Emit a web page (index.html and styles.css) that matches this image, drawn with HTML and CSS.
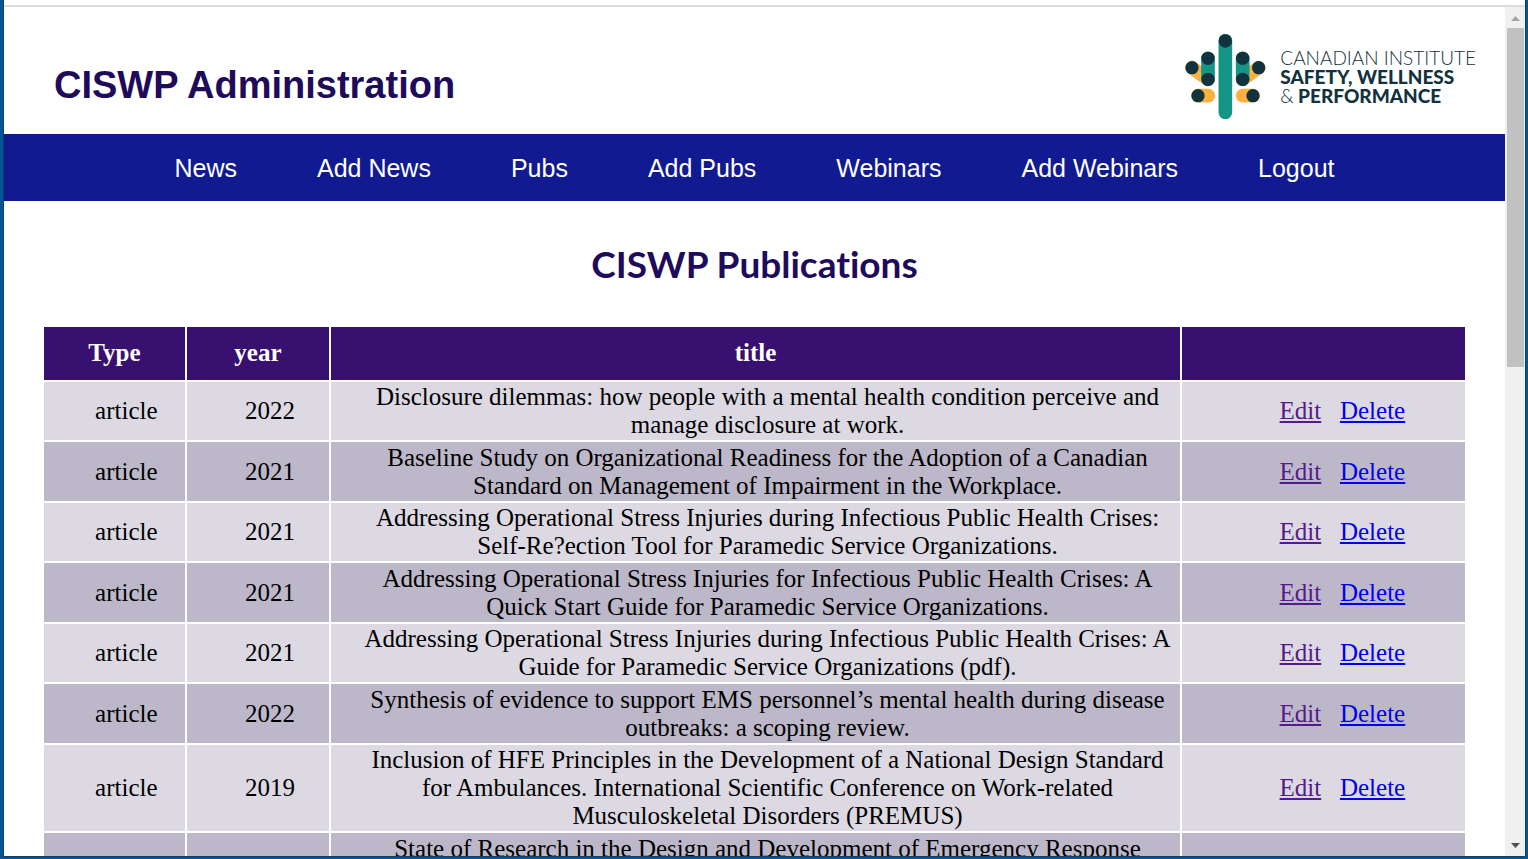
FILE: index.html
```html
<!DOCTYPE html>
<html lang="en">
<head>
<meta charset="utf-8">
<title>CISWP Administration</title>
<link rel="stylesheet" href="styles.css">
</head>
<body>
<div class="window">
  <div class="viewport">
    <header class="masthead">
      <h1 class="site-title">CISWP Administration</h1>
      <div class="logo">
        <svg class="logo-mark" viewBox="24 27 241 255" aria-hidden="true">
          <g stroke-linecap="round" stroke-width="41">
            <g stroke="#fbb040">
              <path d="M44 128L92 163M244 128L196 163M62 212H93M227 212H196"/>
            </g>
            <g stroke="#159588">
              <path d="M92 100V163M196 100V163M144 47V262"/>
            </g>
          </g>
          <g fill="#12323d">
            <circle cx="144" cy="48" r="20"/>
            <circle cx="92" cy="100" r="20"/>
            <circle cx="196" cy="100" r="20"/>
            <circle cx="44" cy="128" r="20"/>
            <circle cx="244" cy="128" r="20"/>
            <circle cx="92" cy="163" r="20"/>
            <circle cx="196" cy="163" r="20"/>
            <circle cx="62" cy="212" r="20"/>
            <circle cx="227" cy="212" r="20"/>
          </g>
        </svg>
        <div class="logo-text">
          <span class="logo-light">CANADIAN INSTITUTE</span>
          <span class="logo-bold">SAFETY, WELLNESS</span>
          <span class="logo-bold"><span class="logo-light">&amp;</span> PERFORMANCE</span>
        </div>
      </div>
    </header>
    <nav class="menu">
      <a href="#">News</a>
      <a href="#">Add News</a>
      <a href="#">Pubs</a>
      <a href="#">Add Pubs</a>
      <a href="#">Webinars</a>
      <a href="#">Add Webinars</a>
      <a href="#">Logout</a>
    </nav>
    <main>
      <h2 class="page-title">CISWP Publications</h2>
      <table class="pubs">
        <colgroup><col class="narrow"><col class="narrow"><col class="wide"><col class="links"></colgroup>
        <thead>
          <tr><th>Type</th><th>year</th><th>title</th><th></th></tr>
        </thead>
        <tbody>
          <tr><td>article</td><td>2022</td><td>Disclosure dilemmas: how people with a mental health condition perceive and manage disclosure at work.</td><td class="actions"><a class="visited" href="#">Edit</a>&nbsp;&nbsp; <a href="#">Delete</a></td></tr>
          <tr><td>article</td><td>2021</td><td>Baseline Study on Organizational Readiness for the Adoption of a Canadian Standard on Management of Impairment in the Workplace.</td><td class="actions"><a class="visited" href="#">Edit</a>&nbsp;&nbsp; <a href="#">Delete</a></td></tr>
          <tr><td>article</td><td>2021</td><td>Addressing Operational Stress Injuries during Infectious Public Health Crises: Self-Re?ection Tool for Paramedic Service Organizations.</td><td class="actions"><a class="visited" href="#">Edit</a>&nbsp;&nbsp; <a href="#">Delete</a></td></tr>
          <tr><td>article</td><td>2021</td><td>Addressing Operational Stress Injuries for Infectious Public Health Crises: A Quick Start Guide for Paramedic Service Organizations.</td><td class="actions"><a class="visited" href="#">Edit</a>&nbsp;&nbsp; <a href="#">Delete</a></td></tr>
          <tr><td>article</td><td>2021</td><td>Addressing Operational Stress Injuries during Infectious Public Health Crises: A Guide for Paramedic Service Organizations (pdf).</td><td class="actions"><a class="visited" href="#">Edit</a>&nbsp;&nbsp; <a href="#">Delete</a></td></tr>
          <tr><td>article</td><td>2022</td><td>Synthesis of evidence to support EMS personnel’s mental health during disease outbreaks: a scoping review.</td><td class="actions"><a class="visited" href="#">Edit</a>&nbsp;&nbsp; <a href="#">Delete</a></td></tr>
          <tr><td>article</td><td>2019</td><td>Inclusion of HFE Principles in the Development of a National Design Standard for Ambulances. International Scientific Conference on Work-related Musculoskeletal Disorders (PREMUS)</td><td class="actions"><a class="visited" href="#">Edit</a>&nbsp;&nbsp; <a href="#">Delete</a></td></tr>
          <tr><td></td><td></td><td>State of Research in the Design and Development of Emergency Response</td><td></td></tr>
        </tbody>
      </table>
    </main>
  </div>
  <div class="scrollbar" aria-hidden="true">
    <svg class="arrow" viewBox="0 0 20 21"><path d="M6 14H15L10.500 9Z" fill="#a3a3a3"/></svg>
    <div class="track"><div class="thumb"></div></div>
    <svg class="arrow" viewBox="0 0 20 21"><path d="M6 8H15L10.500 13Z" fill="#505050"/></svg>
  </div>
</div>
</body>
</html>
```
FILE: styles.css
```css
* { box-sizing: border-box; }

body {
  margin: 0;
  height: 100vh;
  padding: 0 2px 2px 3px;
  background: #00559b;
  overflow: hidden;
}

.window {
  display: flex;
  height: 100%;
  padding-top: 5px;
  border: 1px solid #1c3c5a;
  border-top: 0;
  background: #fff;
}

.viewport {
  flex: 1;
  min-width: 0;
  overflow: hidden;
  border-top: 2px solid #dcdcdc;
}

.masthead {
  display: flex;
  justify-content: space-between;
  align-items: center;
  height: 127px;
  padding: 12px 29px 0 50px;
}

.site-title {
  margin: 16px 0 0;
  color: #1e0b5c;
  font: bold 38px/44px "Franklin Gothic Medium", "Liberation Sans", Arial, sans-serif;
}

.logo { display: flex; align-items: center; gap: 14px; }
.logo-mark { width: 81px; height: 85px; fill: none; }

.logo-text {
  display: flex;
  flex-direction: column;
  color: #12323d;
  font: 19px/19px Lato, sans-serif;
  white-space: nowrap;
}
.logo-bold { font-weight: 900; }
.logo-light { font-weight: 300; }

.menu {
  display: flex;
  justify-content: center;
  gap: 80px;
  padding: 20px 0 19px;
  background: #111a90;
}
.menu a {
  color: #fff;
  font: 25px/28px "Liberation Sans", Arial, sans-serif;
  text-decoration: none;
}

.page-title {
  margin: 37px 0 35px;
  color: #1e0b5c;
  font: bold 37px/52px "Comic Sans MS", Lato, cursive;
  font-variant-ligatures: none;
  text-align: center;
}

.pubs {
  width: 95%;
  margin: 0 auto;
  table-layout: fixed;
  border-spacing: 2px;
  font: 25px/28px "Liberation Serif", "Times New Roman", serif;
  text-align: center;
}
.narrow { width: 10%; }
.wide { width: 60%; }
.links { width: 20%; }

.pubs th {
  height: 53px;
  padding: 0 0 2px;
  background: #371070;
  color: #fff;
}
.pubs td {
  padding: 1px 1px 1px 25px;
  background: #dcd9e3;
  color: #000;
}
.pubs tbody tr:nth-child(even) td {
  padding-top: 2px;
  background: #bdb8c9;
}
.pubs .actions { padding-left: 38px; }
.actions a { color: #00e; text-decoration: underline; }
.actions .visited { color: #551a8b; }

.scrollbar {
  display: flex;
  flex-direction: column;
  width: 20px;
  border-top: 2px solid #dcdcdc;
  background: #f0f0f0;
}
.arrow { width: 20px; height: 21px; }
.track { flex: 1; padding: 0 1px 0 2px; }
.thumb { height: 42%; background: #c1c1c1; }
```
